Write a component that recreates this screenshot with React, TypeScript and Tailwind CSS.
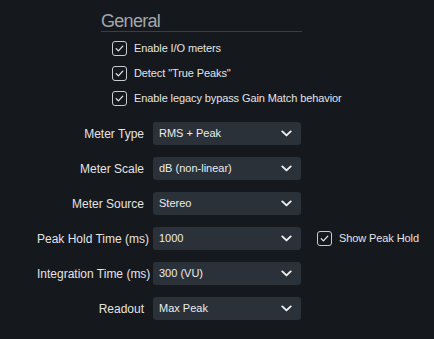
import React from "react";

function Check() {
  return (
    <span className="flex h-[15px] w-[15px] shrink-0 items-center justify-center rounded-[3px] border-[1.5px] border-[#c9cbce] bg-[#15181d]">
      <svg width="11" height="11" viewBox="0 0 11 11" fill="none">
        <polyline points="2.2,5.6 4.4,7.9 8.8,3.1" stroke="#e8e8e8" strokeWidth="1.25" strokeLinecap="round" strokeLinejoin="round" />
      </svg>
    </span>
  );
}

function Chevron() {
  return (
    <svg width="11" height="7" viewBox="0 0 11 7" fill="none">
      <polyline points="1.3,1.4 5.5,5.4 9.7,1.4" stroke="#f0f0f0" strokeWidth="1.9" strokeLinecap="round" strokeLinejoin="round" />
    </svg>
  );
}

function Select({ value }: { value: string }) {
  return (
    <div className="flex h-[23px] w-[148px] items-center justify-between rounded-[3px] bg-[#2b3139] pl-[6px] pr-[9px] text-[11px] text-[#ececec]">
      <span>{value}</span>
      <Chevron />
    </div>
  );
}

const rows = [
  { label: "Meter Type", value: "RMS + Peak" },
  { label: "Meter Scale", value: "dB (non-linear)" },
  { label: "Meter Source", value: "Stereo" },
  { label: "Peak Hold Time (ms)", value: "1000", extra: true },
  { label: "Integration Time (ms)", value: "300 (VU)" },
  { label: "Readout", value: "Max Peak" },
];

export default function App() {
  return (
    <div
      className="h-[339px] w-[434px] overflow-hidden bg-[#15181d] text-[12px] text-[#e4e4e4]"
      style={{ fontFamily: '"Liberation Sans", Arial, sans-serif' }}
    >
      <div className="ml-[101px] w-[201px] border-b border-[#3a3f46] pt-[11px]">
        <div className="text-[18px] leading-[20px] tracking-[-0.7px] text-[#a3a7ac]">General</div>
      </div>
      <div className="ml-[112px] mt-[9px] flex flex-col gap-[10px]">
        {["Enable I/O meters", 'Detect "True Peaks"', "Enable legacy bypass Gain Match behavior"].map((t) => (
          <div key={t} className="flex h-[15px] items-center gap-[7px]">
            <Check />
            <span className="whitespace-nowrap text-[11px] tracking-[-0.1px]">{t}</span>
          </div>
        ))}
      </div>
      <div className="mt-[16px] flex flex-col gap-[12px]">
        {rows.map((r) => (
          <div key={r.label} className="flex h-[23px] items-center">
            <div className="ml-[37px] w-[107px] whitespace-nowrap text-right">{r.label}</div>
            <div className="ml-[9px]">
              <Select value={r.value} />
            </div>
            {r.extra && (
              <div className="ml-[16px] flex items-center gap-[7px]">
                <Check />
                <span className="whitespace-nowrap text-[11px] tracking-[-0.1px]">Show Peak Hold</span>
              </div>
            )}
          </div>
        ))}
      </div>
    </div>
  );
}
